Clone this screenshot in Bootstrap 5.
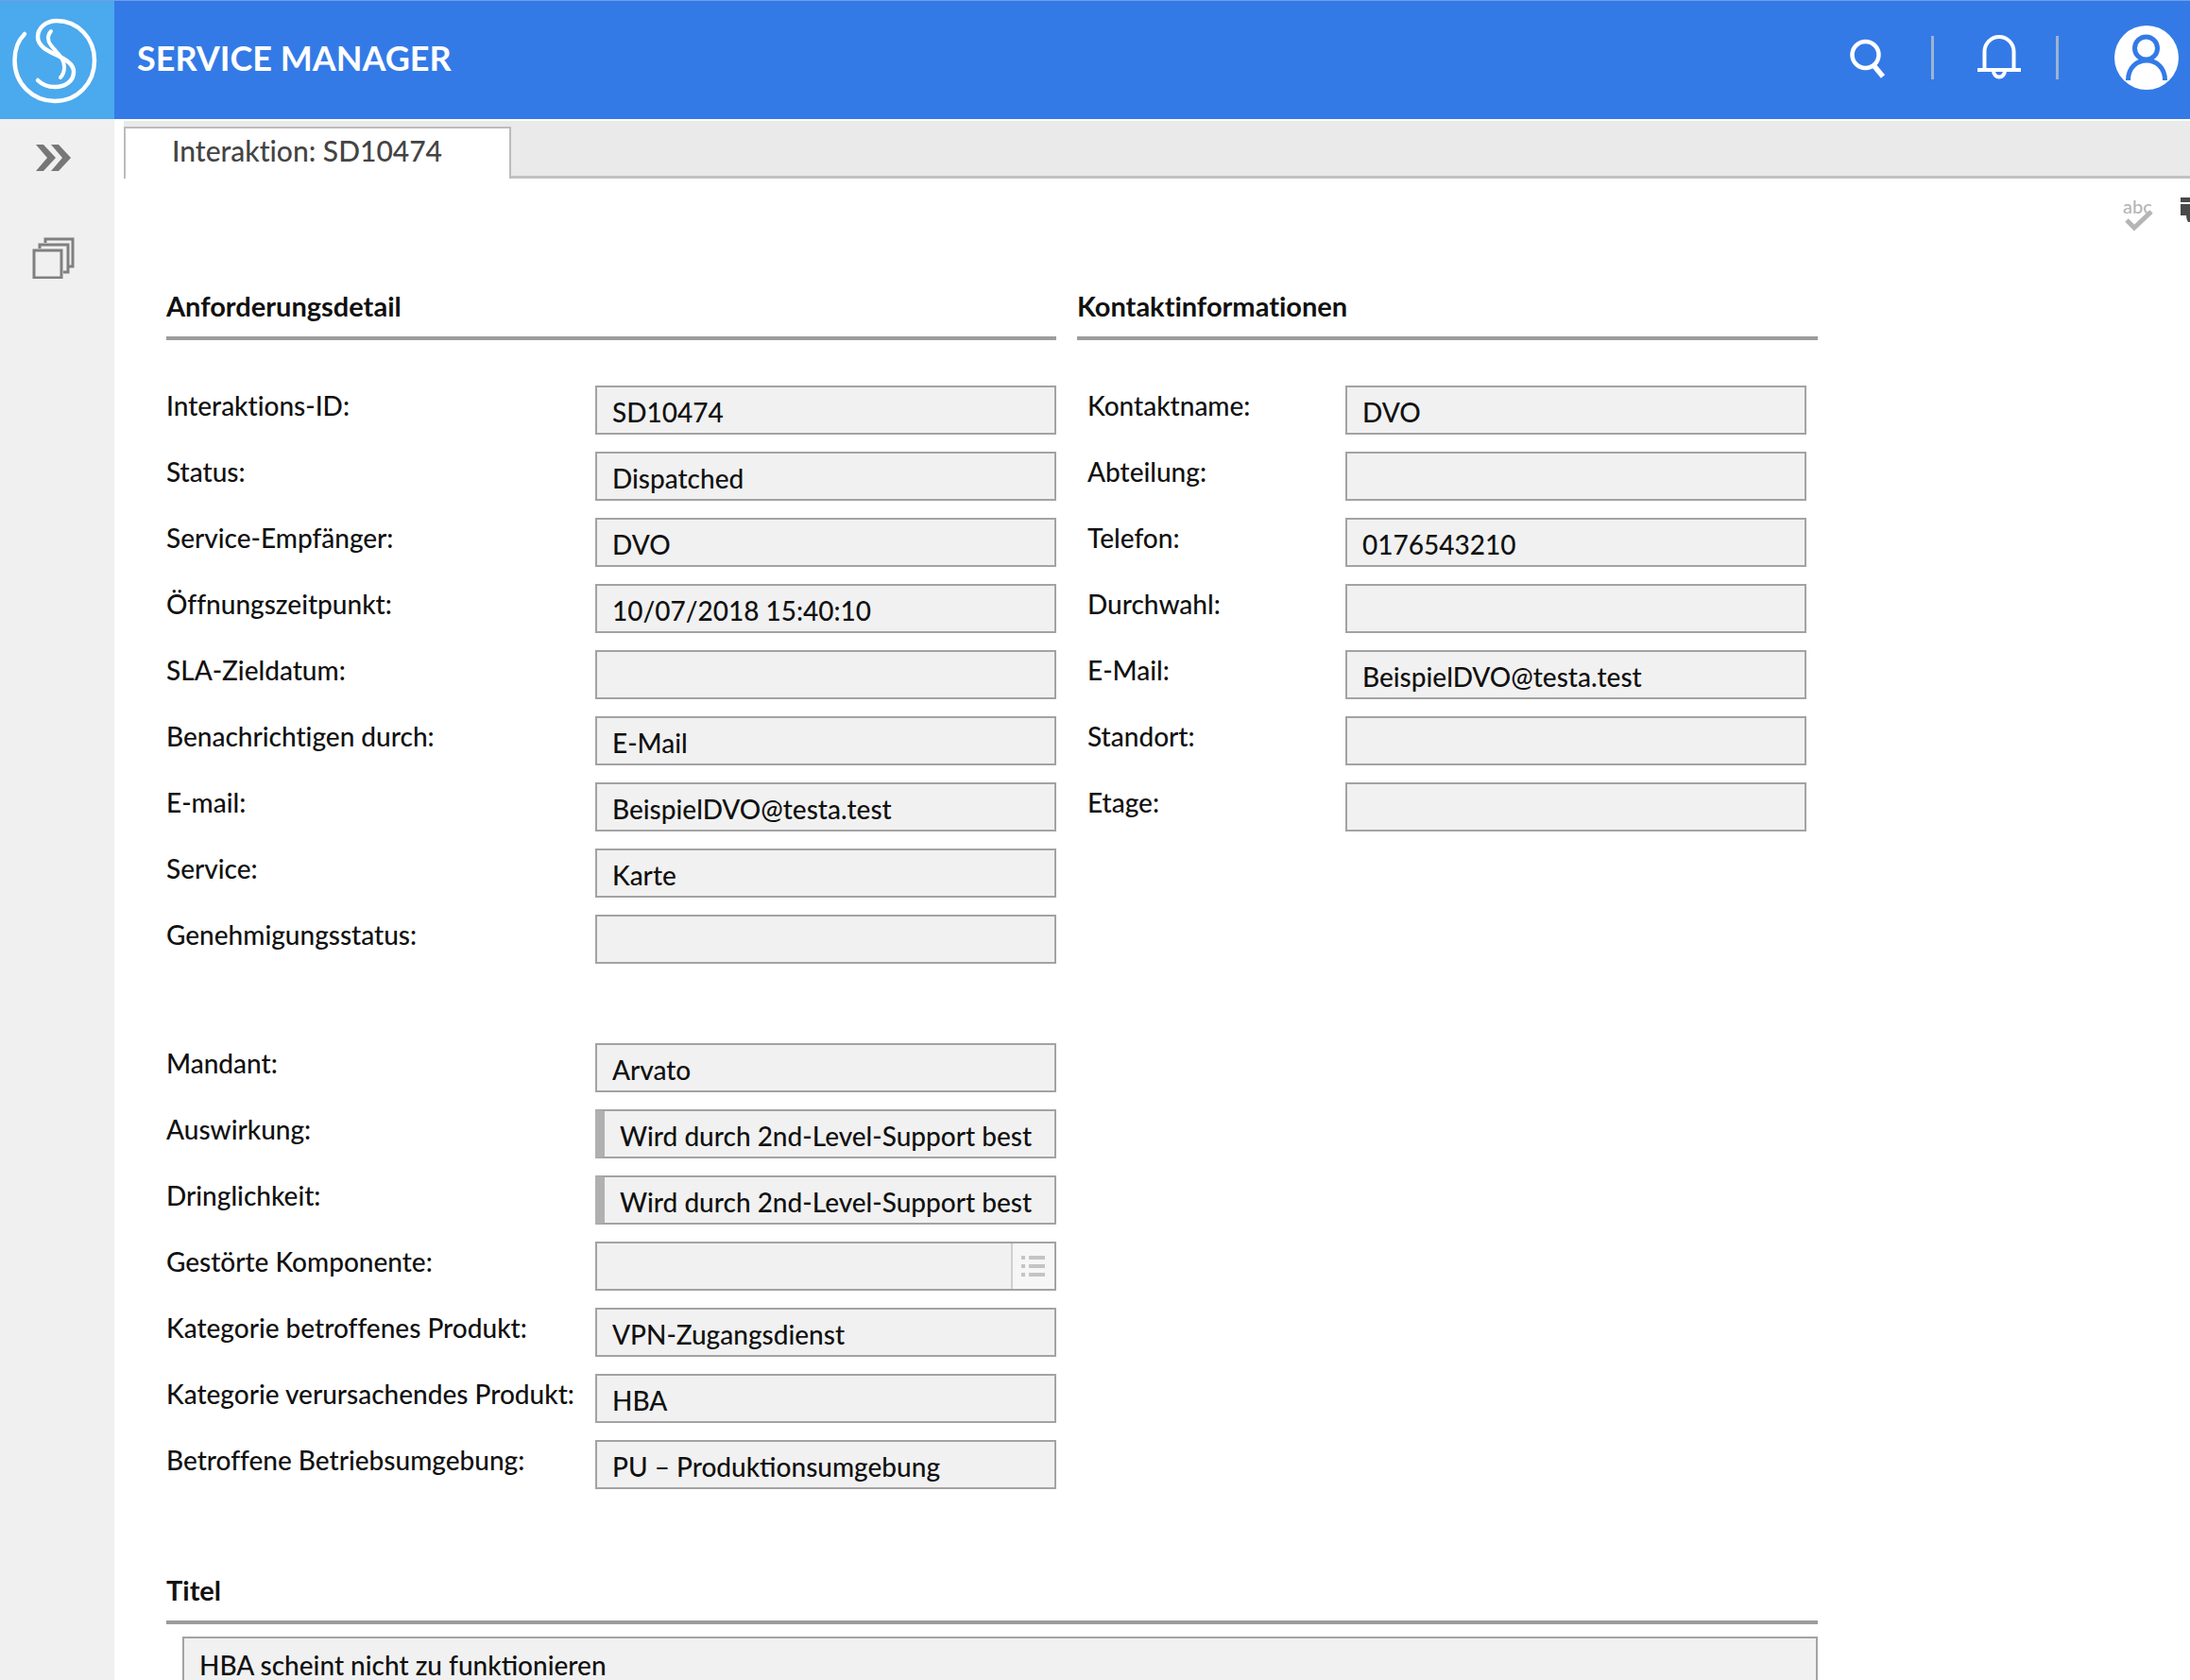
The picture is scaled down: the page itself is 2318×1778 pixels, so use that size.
<!DOCTYPE html>
<html lang="de">
<head>
<meta charset="utf-8">
<meta name="viewport" content="width=device-width, initial-scale=1">
<title>Service Manager – Interaktion SD10474</title>
<link href="https://cdn.jsdelivr.net/npm/bootstrap@5.3.0/dist/css/bootstrap.min.css" rel="stylesheet">
<style>
  body { font-family: Lato, "Open Sans", sans-serif; font-size: 28px; line-height: 34px; font-weight: 500; font-variant-ligatures: none; color: #111; background: #fff; }
  .topbar { height: 126px; background: #337ae7; border-top: 1px solid #6f9fe9; }
  .brand-tile { width: 121px; background: #4ba9ed; }
  .bar-body { padding: 0 12px 6px 24px; }
  .app-title { font-size: 36px; line-height: 44px; }
  .tools .sep { width: 3px; height: 46px; margin: 0 46px; background: #9db4d0; }
  .tools .sep-user { margin: 0 59px 0 37px; }
  .bare { background: none; border: 0; padding: 0; display: block; }
  .bare svg, .brand-tile svg { display: block; }
  .rail { width: 121px; background: #f0f0f0; gap: 61px; padding-top: 24px; }
  .tabstrip { background: #eaeaea; margin: 2px 0 0 10px; height: 61px; padding-top: 6px; }
  .tabstrip .tab-link { width: 410px; border: 2px solid #bcbcbc; border-bottom: 0; background: #fff; color: #444; font-size: 30px; line-height: 36px; padding: 5px 0 0 49px; }
  .tabstrip .tab-rest { border-bottom: 3px solid #c2c2c2; }
  .record-tools { height: 118px; gap: 24px; padding: 18px 0 0; overflow: hidden; }
  .record-tools .clip { width: 10px; overflow: hidden; }
  .record { padding-left: 55px; max-width: 1803px; }
  .sec-title { font-size: 29px; line-height: 34px; font-weight: 700; border-bottom: 4px solid #9c9c9c; padding-bottom: 15px; margin: 0; }
  .sections { gap: 22px; }
  .main-col { flex: 942 1 0; }
  .side-col { flex: 784 1 0; }
  .fields { display: flex; flex-direction: column; gap: 18px; padding-top: 48px; }
  .fields.side { padding-left: 11px; padding-right: 12px; }
  .fields.group2 { padding-top: 84px; }
  .fld { display: flex; }
  .fld label { flex: 1 1 0; white-space: nowrap; padding-top: 4px; }
  .fld .box { flex: 0 0 488px; }
  .box, .wide { height: 52px; border: 2px solid #a3a3a3; border-radius: 0; background: #f1f1f1; color: #111; font-weight: 500; font-size: 28px; line-height: 34px; padding: 3px 16px 0; min-width: 0; }
  .box.marked { border-left: 10px solid #b0b0b0; padding-right: 8px; }
  .box.lookup { padding: 0; display: flex; }
  .box.lookup input { flex: 1; min-width: 0; border: 0; background: transparent; padding: 3px 16px 0; }
  .box.lookup button { width: 46px; border: 0; border-left: 2px solid #cfcfcf; background: #f6f6f6; padding: 0; display: flex; align-items: center; justify-content: center; }
  .titel { padding-top: 90px; }
  .wide { display: block; width: calc(100% - 17px); height: 56px; margin: 13px 0 0 17px; }
</style>
</head>
<body class="vh-100 overflow-hidden d-flex flex-column">
<header class="topbar d-flex align-items-stretch flex-shrink-0">
  <a href="#" class="brand-tile d-block" aria-label="Startseite">
    <svg width="121" height="125" viewBox="0 0 121 125" fill="none" stroke="#fff" stroke-linecap="round">
      <path stroke-width="4.500" d="M26 35C18 43 15.500 53 15.500 63C15.500 88 35 106 58 106C82 106 100 87 100 63C100 39 82 21 60 21C48 21 40 29 40 38C40 57 78 57 78 75C78 85 69 91 58 91C50 91 44 88 40 84"/>
      <path stroke-width="4" d="M54 32C50 36 50 42 54 47C60 55 68 60 68 70C68 75 67 78 64 81"/>
    </svg>
  </a>
  <div class="bar-body d-flex flex-grow-1 align-items-center justify-content-between">
  <h1 class="app-title text-white fw-bold mb-0">SERVICE MANAGER</h1>
  <div class="tools d-flex align-items-center">
    <button class="bare" type="button" aria-label="Suchen"><svg width="40" height="48" viewBox="0 0 40 48" fill="none" stroke="#fff"><circle cx="16.500" cy="21" r="14" stroke-width="4.500"/><path d="M25 32L35 44" stroke-width="5.500"/></svg></button>
    <span class="sep"></span>
    <button class="bare" type="button" aria-label="Benachrichtigungen"><svg width="46" height="48" viewBox="0 0 46 48" fill="none" stroke="#fff" stroke-width="4"><path d="M0 37H46M7.500 37V17.500a15.500 15.500 0 0 1 31 0V37M17 38a6 6.500 0 0 0 12 0"/></svg></button>
    <span class="sep sep-user"></span>
    <button class="bare" type="button" aria-label="Benutzerprofil"><svg width="68" height="68" viewBox="0 0 68 68"><circle cx="34" cy="34" r="34" fill="#fff"/><g fill="none" stroke="#337ae7" stroke-width="5"><circle cx="33.500" cy="24" r="12"/><path d="M14.500 58C14.500 30 53.500 30 53.500 58"/></g></svg></button>
  </div>
  </div>
</header>
<div class="d-flex flex-grow-1 overflow-hidden">
  <nav class="rail d-flex flex-column flex-shrink-0" aria-label="Navigation">
    <button class="bare" type="button" aria-label="Ausklappen"><svg width="121" height="34" viewBox="0 0 121 34" fill="#777"><path d="M38 3h8l13 14-13 14h-8l12-14zM54 3h8l13 14-13 14h-8l12-14z"/></svg></button>
    <button class="bare" type="button" aria-label="Fenster"><svg width="121" height="50" viewBox="0 0 121 50" fill="none" stroke="#808080" stroke-width="3"><path d="M36 20h29v29H36zM42 18V14h30v29H67M48 12V8h29v29H73"/></svg></button>
  </nav>
  <main class="flex-grow-1 overflow-hidden">
    <div class="tabstrip d-flex align-items-stretch">
      <a href="#" class="tab-link text-decoration-none">Interaktion: SD10474</a>
      <span class="tab-rest flex-grow-1"></span>
    </div>
    <div class="record-tools d-flex justify-content-end align-items-start">
      <button class="bare" type="button" aria-label="Rechtschreibung prüfen"><svg width="40" height="42" viewBox="0 0 40 42"><text x="3" y="19" font-family="Lato, sans-serif" font-size="20" font-weight="500" fill="#b5b5b5">abc</text><path d="M7 26l8 8 18-17" fill="none" stroke="#b5b5b5" stroke-width="5"/></svg></button>
      <button class="bare clip" type="button" aria-label="Drucken"><svg width="36" height="40" viewBox="0 0 36 40" fill="#4a4a4a"><path d="M0 2h36v5H0zM0 9h36v12h-6v7H8q-2-3-2-7H0z"/></svg></button>
    </div>
    <form class="record">
      <div class="sections d-flex">
        <section class="main-col">
          <h2 class="sec-title">Anforderungsdetail</h2>
          <div class="fields">
            <div class="fld"><label for="f1">Interaktions-ID:</label><input class="box" id="f1" value="SD10474" readonly></div>
            <div class="fld"><label for="f2">Status:</label><input class="box" id="f2" value="Dispatched" readonly></div>
            <div class="fld"><label for="f3">Service-Empfänger:</label><input class="box" id="f3" value="DVO" readonly></div>
            <div class="fld"><label for="f4">Öffnungszeitpunkt:</label><input class="box" id="f4" value="10/07/2018 15:40:10" readonly></div>
            <div class="fld"><label for="f5">SLA-Zieldatum:</label><input class="box" id="f5" readonly></div>
            <div class="fld"><label for="f6">Benachrichtigen durch:</label><input class="box" id="f6" value="E-Mail" readonly></div>
            <div class="fld"><label for="f7">E-mail:</label><input class="box" id="f7" value="BeispielDVO@testa.test" readonly></div>
            <div class="fld"><label for="f8">Service:</label><input class="box" id="f8" value="Karte" readonly></div>
            <div class="fld"><label for="f9">Genehmigungsstatus:</label><input class="box" id="f9" readonly></div>
          </div>
          <div class="fields group2">
            <div class="fld"><label for="f10">Mandant:</label><input class="box" id="f10" value="Arvato" readonly></div>
            <div class="fld"><label for="f11">Auswirkung:</label><input class="box marked" id="f11" value="Wird durch 2nd-Level-Support best" readonly></div>
            <div class="fld"><label for="f12">Dringlichkeit:</label><input class="box marked" id="f12" value="Wird durch 2nd-Level-Support best" readonly></div>
            <div class="fld"><label for="f13">Gestörte Komponente:</label><div class="box lookup"><input id="f13" readonly><button type="button" aria-label="Auswählen"><svg width="26" height="24" viewBox="0 0 26 24" fill="#c4c4c4"><path d="M0 1h4v4H0zM8 1h17v4H8zM0 10h4v4H0zM8 10h17v4H8zM0 19h4v4H0zM8 19h17v4H8z"/></svg></button></div></div>
            <div class="fld"><label for="f14">Kategorie betroffenes Produkt:</label><input class="box" id="f14" value="VPN-Zugangsdienst" readonly></div>
            <div class="fld"><label for="f15">Kategorie verursachendes Produkt:</label><input class="box" id="f15" value="HBA" readonly></div>
            <div class="fld"><label for="f16">Betroffene Betriebsumgebung:</label><input class="box" id="f16" value="PU – Produktionsumgebung" readonly></div>
          </div>
        </section>
        <section class="side-col">
          <h2 class="sec-title">Kontaktinformationen</h2>
          <div class="fields side">
            <div class="fld"><label for="k1">Kontaktname:</label><input class="box" id="k1" value="DVO" readonly></div>
            <div class="fld"><label for="k2">Abteilung:</label><input class="box" id="k2" readonly></div>
            <div class="fld"><label for="k3">Telefon:</label><input class="box" id="k3" value="0176543210" readonly></div>
            <div class="fld"><label for="k4">Durchwahl:</label><input class="box" id="k4" readonly></div>
            <div class="fld"><label for="k5">E-Mail:</label><input class="box" id="k5" value="BeispielDVO@testa.test" readonly></div>
            <div class="fld"><label for="k6">Standort:</label><input class="box" id="k6" readonly></div>
            <div class="fld"><label for="k7">Etage:</label><input class="box" id="k7" readonly></div>
          </div>
        </section>
      </div>
      <section class="titel">
        <h2 class="sec-title"><label for="t1">Titel</label></h2>
        <input class="wide" id="t1" value="HBA scheint nicht zu funktionieren" readonly>
      </section>
    </form>
  </main>
</div>
<script src="https://cdn.jsdelivr.net/npm/bootstrap@5.3.0/dist/js/bootstrap.bundle.min.js"></script>
</body>
</html>
